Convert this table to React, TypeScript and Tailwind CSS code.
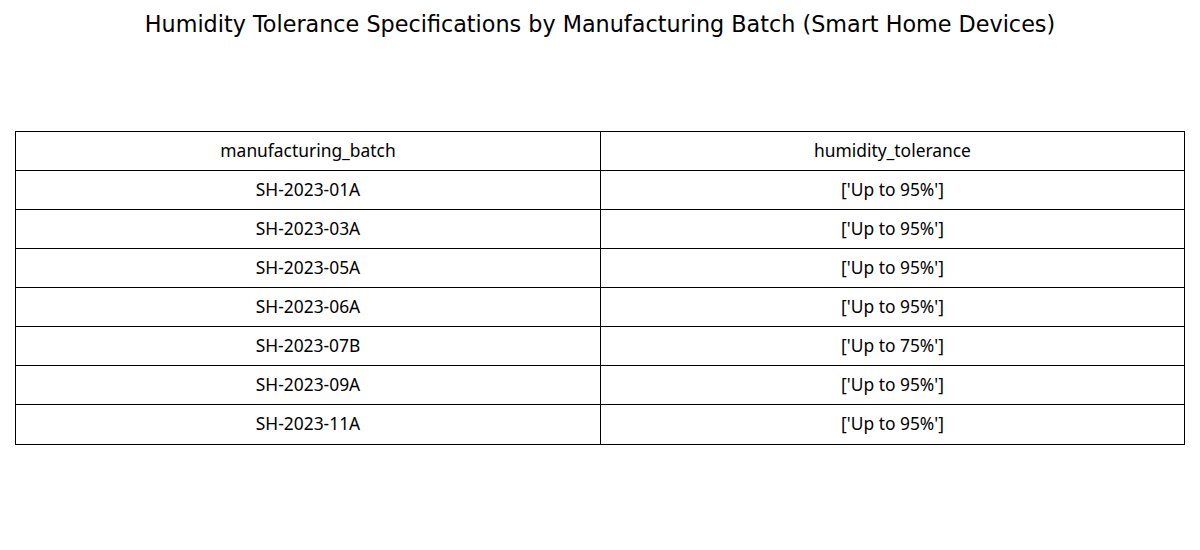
const rows = [
  ["SH-2023-01A", "['Up to 95%']"],
  ["SH-2023-03A", "['Up to 95%']"],
  ["SH-2023-05A", "['Up to 95%']"],
  ["SH-2023-06A", "['Up to 95%']"],
  ["SH-2023-07B", "['Up to 75%']"],
  ["SH-2023-09A", "['Up to 95%']"],
  ["SH-2023-11A", "['Up to 95%']"],
]

function Row({ cells }: { cells: string[] }) {
  return (
    <div className="grid h-[39px] grid-cols-[585px_1fr] border-b border-black last:border-b-0">
      <div className="flex items-center justify-center border-r border-black pb-[2px]">{cells[0]}</div>
      <div className="flex items-center justify-center pb-[2px]">{cells[1]}</div>
    </div>
  )
}

export default function App() {
  return (
    <div className="h-[550px] w-[1200px] bg-white text-black">
      <h1 className="pt-[10px] text-center text-[22.3px] leading-[28px] [font-family:'DejaVu_Sans',sans-serif]">
        Humidity Tolerance Specifications by Manufacturing Batch (Smart Home Devices)
      </h1>
      {/* table */}
      <div className="mx-[15px] mt-[93px] border border-black text-[17.4px] [font-family:'Noto_Sans',sans-serif]">
        <Row cells={["manufacturing_batch", "humidity_tolerance"]} />
        {rows.map((r) => (
          <Row key={r[0]} cells={r} />
        ))}
      </div>
    </div>
  )
}
